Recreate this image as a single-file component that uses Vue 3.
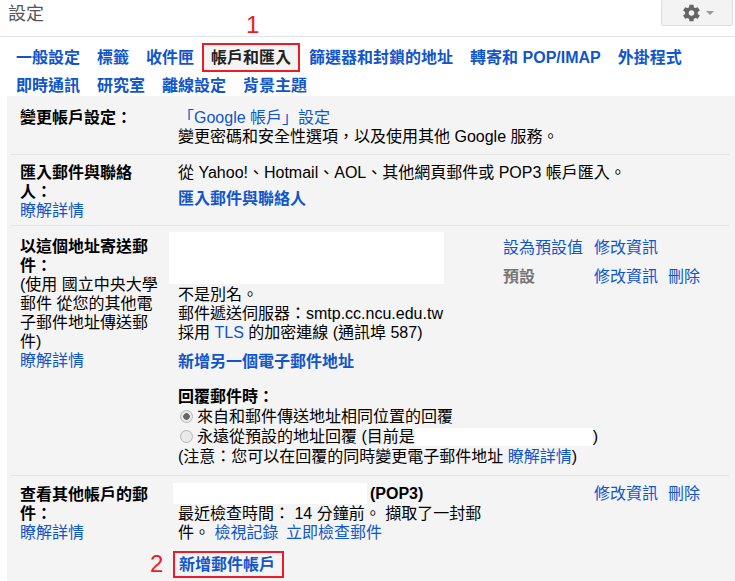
<script setup>
const tabs = [
  { label: '一般設定' },
  { label: '標籤' },
  { label: '收件匣' },
  { label: '帳戶和匯入', active: true },
  { label: '篩選器和封鎖的地址' },
  { label: '轉寄和 POP/IMAP' },
  { label: '外掛程式' },
  { label: '即時通訊' },
  { label: '研究室' },
  { label: '離線設定' },
  { label: '背景主題' }
]
</script>

<template>
  <div class="page">
    <header class="top">
      <span class="title">設定</span>
      <button class="gear-btn">
        <svg width="22" height="22" viewBox="0 0 24 24">
          <path
            fill="#666"
            fill-rule="evenodd"
            d="M19.4 13a7.6 7.6 0 0 0 0-2l2.2-1.7-2.2-3.7-2.6 1a7.6 7.6 0 0 0-1.700-1L14.700 2.900h-4.400l-.4 2.700a7.600 7.600 0 0 0-1.700 1l-2.600-1-2.200 3.700L5.600 11a7.600 7.600 0 0 0 0 2l-2.200 1.700 2.200 3.700 2.600-1a7.600 7.600 0 0 0 1.700 1l.4 2.700h4.400l.4-2.700a7.600 7.600 0 0 0 1.700-1l2.600 1 2.200-3.700zM12.500 15a3 3 0 1 1 0-6 3 3 0 0 1 0 6z"
          />
        </svg>
        <span class="caret"></span>
      </button>
    </header>

    <nav class="tabs">
      <a v-for="tab in tabs" :key="tab.label" class="tab" :class="{ active: tab.active }">{{ tab.label }}</a>
    </nav>
    <span class="mark mark-one">1</span>

    <div class="settings">
      <section class="row">
        <div class="label"><b>變更帳戶設定：</b></div>
        <div class="content">
          <div class="text"><a>「Google 帳戶」設定</a></div>
          <div class="text">變更密碼和安全性選項，以及使用其他 Google 服務。</div>
        </div>
      </section>

      <section class="row row-import">
        <div class="label">
          <b>匯入郵件與聯絡人：</b><br />
          <a>瞭解詳情</a>
        </div>
        <div class="content">
          <div class="text">從 Yahoo!、Hotmail、AOL、其他網頁郵件或 POP3 帳戶匯入。</div>
          <div class="text action"><a class="strong">匯入郵件與聯絡人</a></div>
        </div>
      </section>

      <section class="row row-send">
        <div class="label">
          <b>以這個地址寄送郵件：</b><br />
          (使用 國立中央大學郵件 從您的其他電子郵件地址傳送郵件)<br />
          <a>瞭解詳情</a>
        </div>
        <div class="content">
          <div class="address">
            <div class="redacted"></div>
            <div class="links">
              <div class="link-line">
                <a class="first">設為預設值</a>
                <a>修改資訊</a>
              </div>
              <div class="link-line">
                <b class="first default">預設</b>
                <a>修改資訊</a>
                <a>刪除</a>
              </div>
            </div>
          </div>
          <div class="text">不是別名。</div>
          <div class="text">郵件遞送伺服器：smtp.cc.ncu.edu.tw</div>
          <div class="text">採用 <a>TLS</a> 的加密連線 (通訊埠 587)</div>
          <div class="text add-address"><a class="strong">新增另一個電子郵件地址</a></div>
          <div class="text reply-title"><b>回覆郵件時：</b></div>
          <div class="text radio-line first-radio"><span class="radio on"></span>來自和郵件傳送地址相同位置的回覆</div>
          <div class="text radio-line second">
            <span class="radio"></span>永遠從預設的地址回覆 (目前是<span class="redacted-inline"></span>)
          </div>
          <div class="text note">(注意：您可以在回覆的同時變更電子郵件地址 <a>瞭解詳情</a>)</div>
        </div>
      </section>

      <section class="row row-check">
        <div class="label">
          <b>查看其他帳戶的郵件：</b><br />
          <a>瞭解詳情</a>
        </div>
        <div class="content">
          <div class="address check">
            <div class="account">
              <div class="account-name"><span class="redacted-name"></span><b>(POP3)</b></div>
              <div class="status">最近檢查時間： 14 分鐘前。 擷取了一封郵件。 <a>檢視記錄</a> <a class="check-now">立即檢查郵件</a></div>
            </div>
            <div class="links check-links">
              <div class="link-line">
                <span class="first"></span>
                <a>修改資訊</a>
                <a>刪除</a>
              </div>
            </div>
          </div>
          <div class="add-row">
            <span class="mark-two">2</span>
            <a class="strong add-account">新增郵件帳戶</a>
          </div>
        </div>
      </section>
    </div>
  </div>
</template>

<style scoped>
.page {
  position: relative;
  width: 735px;
  height: 581px;
  overflow: hidden;
  background: #fff;
  color: #000;
  font: 16px/19px "Liberation Sans", "Noto Sans CJK TC", sans-serif;
}

a {
  color: #15c;
}

.top {
  display: flex;
  justify-content: space-between;
  height: 36px;
  padding: 0 2px 0 8px;
  border-bottom: 1px solid #e5e5e5;
}

.title {
  margin-top: 4px;
  color: #555;
  font-size: 18px;
  line-height: 20px;
}

.gear-btn {
  display: flex;
  align-items: center;
  justify-content: center;
  gap: 4px;
  width: 72px;
  height: 27px;
  margin-top: -1px;
  padding: 0;
  border: 1px solid #dcdcdc;
  border-radius: 2px;
  background: #f3f3f3;
}

.caret {
  border-top: 4px solid #999;
  border-left: 4px solid transparent;
  border-right: 4px solid transparent;
}

.tabs {
  display: flex;
  flex-wrap: wrap;
  align-items: center;
  align-content: flex-start;
  gap: 4px 17px;
  height: 59px;
  padding: 6px 0 0 16px;
  box-sizing: border-box;
}

.tab {
  font-weight: 700;
}

.tab.active {
  margin: 0 -8px 0 -9px;
  padding: 3px 7px;
  border: 2px solid #ed1c24;
  background: #f4f4f4;
  color: #222;
}

.mark {
  position: absolute;
  color: #ed1c24;
  font-size: 24px;
  line-height: 24px;
}

.mark-one {
  top: 13px;
  left: 246px;
}

.settings {
  margin-left: 7px;
  height: 485px;
  background: #f4f4f4;
}

.row {
  display: grid;
  grid-template-columns: 140px 1fr;
  column-gap: 9px;
  margin: 0 6px 0 4px;
  padding: 12px 0 0 9px;
  border-bottom: 1px solid #e3e3e3;
}

.row:nth-child(1) {
  height: 46px;
}

.row-import {
  height: 62px;
  padding-top: 8px;
}

.row-send {
  height: 243px;
  padding-top: 6px;
}

.row-check {
  border-bottom: 0;
  padding-top: 7px;
}

.row-send .label {
  padding-top: 5px;
}

.row-check .label {
  padding-top: 2px;
}

.content > .text {
  margin-left: 9px;
}

.action {
  margin-top: 7px;
}

.strong {
  font-weight: 700;
}

.address {
  display: flex;
  height: 53px;
}

.address.check {
  height: auto;
}

.redacted {
  width: 275px;
  height: 52px;
  background: #fff;
}

.links {
  margin-left: 59px;
  padding-top: 6px;
}

.link-line {
  display: flex;
  gap: 10px;
  height: 29px;
}

.first {
  width: 81px;
}

.default {
  color: #777;
}

.add-address {
  margin-top: 10px;
}

.reply-title {
  margin-top: 16px;
}

.radio-line {
  display: flex;
  align-items: center;
}

.radio-line.first-radio {
  margin-top: 1px;
}

.radio-line.second {
  margin-top: 1px;
}

.note {
  margin-top: 1px;
}

.radio {
  width: 11px;
  height: 11px;
  margin: 0 4px 0 2px;
  border: 1px solid #b5b5b5;
  border-radius: 50%;
  background: #e9e9e9;
}

.radio.on {
  background: radial-gradient(circle, #666 0 3px, #e9e9e9 3.5px);
}

.redacted-inline {
  display: inline-block;
  width: 178px;
  height: 18px;
  background: #fff;
}

.account {
  width: 310px;
  padding-left: 4px;
}

.account-name {
  display: flex;
  align-items: center;
  height: 21px;
}

.redacted-name {
  width: 194px;
  height: 21px;
  margin-right: 3px;
  background: #fff;
}

.status {
  margin-left: 5px;
}

.check-now {
  margin-left: 3px;
}

.check-links {
  margin-left: 20px;
  padding-top: 1px;
}

.add-row {
  position: relative;
  margin-top: 9px;
  padding-left: 4px;
}

.add-account {
  display: inline-block;
  padding: 2px 7px 2px 4px;
  border: 2px solid #ed1c24;
}

.mark-two {
  position: absolute;
  left: -19px;
  top: 1px;
  color: #ed1c24;
  font-size: 24px;
  line-height: 24px;
}
</style>

<style>
html,
body {
  margin: 0;
  padding: 0;
}
</style>
